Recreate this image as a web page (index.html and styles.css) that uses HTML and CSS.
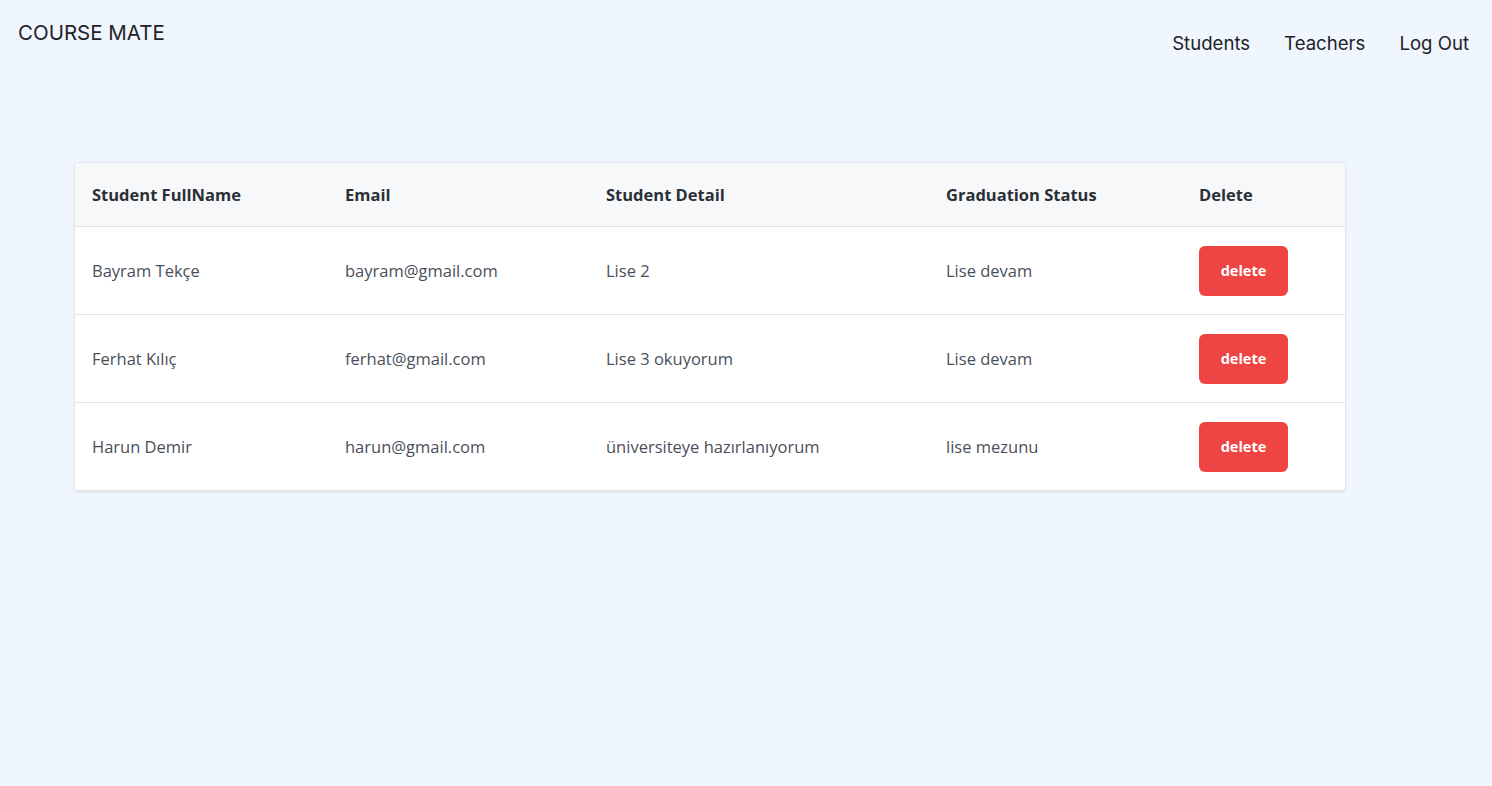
FILE: index.html
```html
<!DOCTYPE html>
<html lang="tr">
<head>
<meta charset="utf-8">
<title>Course Mate</title>
<link rel="stylesheet" href="styles.css">
</head>
<body>
<header class="topbar">
  <div class="brand">COURSE MATE</div>
  <nav class="nav">
    <a href="#">Students</a>
    <a href="#">Teachers</a>
    <a href="#">Log Out</a>
  </nav>
</header>
<main class="content">
  <div class="card">
    <table class="grid">
      <colgroup>
        <col style="width:253px">
        <col style="width:261px">
        <col style="width:340px">
        <col style="width:253px">
        <col style="width:165px">
      </colgroup>
      <thead>
        <tr>
          <th>Student FullName</th>
          <th>Email</th>
          <th>Student Detail</th>
          <th>Graduation Status</th>
          <th>Delete</th>
        </tr>
      </thead>
      <tbody>
        <tr>
          <td>Bayram Tekçe</td>
          <td>bayram@gmail.com</td>
          <td>Lise 2</td>
          <td>Lise devam</td>
          <td><button class="del">delete</button></td>
        </tr>
        <tr>
          <td>Ferhat Kılıç</td>
          <td>ferhat@gmail.com</td>
          <td>Lise 3 okuyorum</td>
          <td>Lise devam</td>
          <td><button class="del">delete</button></td>
        </tr>
        <tr>
          <td>Harun Demir</td>
          <td>harun@gmail.com</td>
          <td>üniversiteye hazırlanıyorum</td>
          <td>lise mezunu</td>
          <td><button class="del">delete</button></td>
        </tr>
      </tbody>
    </table>
  </div>
</main>
</body>
</html>
```
FILE: styles.css
```css
* { box-sizing: border-box; }
html, body { margin: 0; padding: 0; }
body {
  background: #f0f6fe;
  min-height: 786px;
  font-family: "Open Sans", "Noto Sans", sans-serif;
}
.topbar {
  display: flex;
  justify-content: space-between;
  align-items: flex-start;
  padding: 21px 23px 0 18px;
  height: 162px;
}
.brand {
  font-family: Inter, sans-serif;
  font-size: 20.5px;
  line-height: 24px;
  color: #1f2328;
}
.nav {
  display: flex;
  gap: 34px;
  margin-top: 10px;
}
.nav a {
  font-family: Inter, sans-serif;
  font-size: 18.6px;
  line-height: 24px;
  color: #1f2328;
  text-decoration: none;
}
.content {
  padding: 0 0 0 74px;
}
.card {
  width: 1272px;
  background: #fff;
  border: 1px solid #e3e5e8;
  border-radius: 4px;
  box-shadow: 0 1px 2px rgba(0,0,0,0.08);
  overflow: hidden;
}
.grid {
  width: 100%;
  border-collapse: collapse;
  table-layout: fixed;
}
.grid th {
  background: #f7f8fa;
  text-align: left;
  font-weight: 700;
  font-size: 16.5px;
  color: #2b2f36;
  height: 63px;
  padding: 0 0 0 17px;
  border-bottom: 1px solid #e2e4e8;
}
.grid td {
  height: 88px;
  padding: 1px 0 0 17px;
  font-size: 16.5px;
  color: #4a505a;
  border-bottom: 1px solid #e2e4e8;
}
.grid tbody tr:last-child td { border-bottom: 1px solid #e2e4e8; }
.del {
  width: 89px;
  height: 50px;
  border: none;
  border-radius: 6px;
  background: #ef4444;
  color: #fff;
  font-family: "Open Sans", "Noto Sans", sans-serif;
  font-weight: 700;
  font-size: 14.5px;
  cursor: pointer;
}
```
